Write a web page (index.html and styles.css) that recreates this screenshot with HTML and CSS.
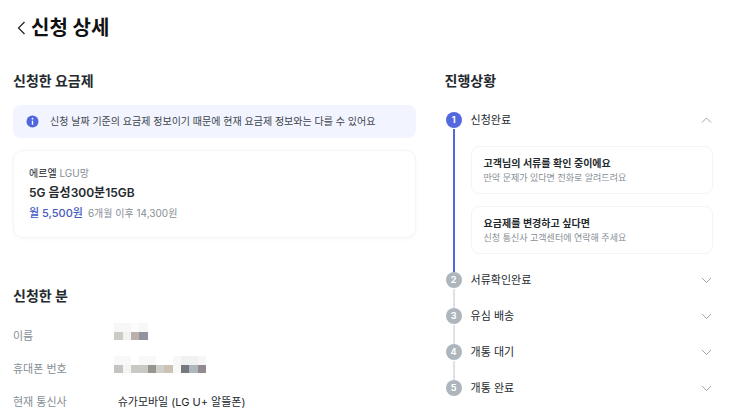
FILE: index.html
```html
<!DOCTYPE html>
<html lang="ko">
<head>
<meta charset="utf-8">
<meta name="viewport" content="width=device-width, initial-scale=1">
<title>신청 상세</title>
<link rel="stylesheet" href="styles.css">
</head>
<body>
<header class="topbar">
  <button class="back" type="button" aria-label="뒤로">
    <svg width="10" height="16" viewBox="0 0 10 16"><path d="M8.500 2 2.500 8l6 6" fill="none" stroke="#222" stroke-width="1.200"/></svg>
  </button>
  <h1>신청 상세</h1>
</header>
<main class="page">
  <div class="main-column">
    <section>
      <h2>신청한 요금제</h2>
      <p class="notice">
        <svg width="13" height="13" viewBox="0 0 13 13" aria-hidden="true"><circle cx="6.500" cy="6.500" r="6" fill="#4f66dc"/><circle cx="6.500" cy="3.700" r=".9" fill="#fff"/><path d="M6.500 5.700v4" stroke="#fff" stroke-width="1.400"/></svg>
        <span>신청 날짜 기준의 요금제 정보이기 때문에 현재 요금제 정보와는 다를 수 있어요</span>
      </p>
      <article class="plan">
        <p class="carrier">에르엘 <span class="network">LGU망</span></p>
        <h3 class="plan-name">5G 음성300분15GB</h3>
        <p class="price"><span class="monthly">월 5,500원</span><span class="later">6개월 이후 14,300원</span></p>
      </article>
    </section>
    <section class="applicant">
      <h2>신청한 분</h2>
      <dl class="details">
        <div class="row">
          <dt>이름</dt>
          <dd>
            <svg class="mask" width="34" height="17" viewBox="0 0 34 17" shape-rendering="crispEdges" role="img" aria-label="비공개">
              <path fill="#f7f7f7" d="M0 0h17v9H0zM25 0h9v9h-9z"/><path fill="#fcfcfc" d="M17 0h8v9h-8z"/>
              <path fill="#cacac6" d="M0 9h9v8H0z"/><path fill="#f2f2ee" d="M9 9h8v8H9z"/><path fill="#bbb0ab" d="M17 9h8v8h-8z"/><path fill="#91949d" d="M25 9h9v8h-9z"/>
            </svg>
          </dd>
        </div>
        <div class="row">
          <dt>휴대폰 번호</dt>
          <dd>
            <svg class="mask" width="92" height="17" viewBox="0 0 92 17" shape-rendering="crispEdges" role="img" aria-label="비공개">
              <path fill="#f8f8f8" d="M0 0h17v9H0zM25 0h17v9H25zM59 0h8v9h-8z"/><path fill="#f0f2f2" d="M67 0h17v9H67z"/><path fill="#f6f6f6" d="M84 0h8v9h-8z"/>
              <path fill="#c2c5c1" d="M0 9h9v8H0z"/><path fill="#f4f4f0" d="M9 9h8v8H9z"/><path fill="#c8c9c5" d="M17 9h17v8H17z"/><path fill="#969590" d="M34 9h8v8h-8z"/><path fill="#d0cec7" d="M42 9h8v8h-8z"/><path fill="#cbc1b5" d="M50 9h9v8h-9z"/><path fill="#f8f8f6" d="M59 9h8v8h-8z"/><path fill="#77787d" d="M67 9h8v8h-8z"/><path fill="#aeb8bc" d="M75 9h9v8h-9z"/><path fill="#918b8f" d="M84 9h8v8h-8z"/>
            </svg>
          </dd>
        </div>
        <div class="row">
          <dt>현재 통신사</dt>
          <dd class="value">슈가모바일 (LG U+ 알뜰폰)</dd>
        </div>
      </dl>
    </section>
  </div>
  <section class="progress">
    <h2>진행상황</h2>
    <ol class="steps">
      <li class="step current">
        <div class="rail"><span class="badge">1</span></div>
        <div class="step-body">
          <button class="step-head" type="button" aria-expanded="true">신청완료
            <svg width="11" height="8" viewBox="0 0 11 8" aria-hidden="true"><path d="m1 6.500 4.500-4.500L10 6.500"/></svg></button>
          <div class="tips">
            <article class="tip"><h3>고객님의 서류를 확인 중이에요</h3><p>만약 문제가 있다면 전화로 알려드려요</p></article>
            <article class="tip"><h3>요금제를 변경하고 싶다면</h3><p>신청 통신사 고객센터에 연락해 주세요</p></article>
          </div>
        </div>
      </li>
      <li class="step">
        <div class="rail"><span class="badge">2</span></div>
        <div class="step-body"><button class="step-head" type="button" aria-expanded="false">서류확인완료
          <svg width="11" height="8" viewBox="0 0 11 8" aria-hidden="true"><path d="m1 2 4.500 4.500L10 2"/></svg></button></div>
      </li>
      <li class="step">
        <div class="rail"><span class="badge">3</span></div>
        <div class="step-body"><button class="step-head" type="button" aria-expanded="false">유심 배송
          <svg width="11" height="8" viewBox="0 0 11 8" aria-hidden="true"><path d="m1 2 4.500 4.500L10 2"/></svg></button></div>
      </li>
      <li class="step">
        <div class="rail"><span class="badge">4</span></div>
        <div class="step-body"><button class="step-head" type="button" aria-expanded="false">개통 대기
          <svg width="11" height="8" viewBox="0 0 11 8" aria-hidden="true"><path d="m1 2 4.500 4.500L10 2"/></svg></button></div>
      </li>
      <li class="step">
        <div class="rail"><span class="badge">5</span></div>
        <div class="step-body"><button class="step-head" type="button" aria-expanded="false">개통 완료
          <svg width="11" height="8" viewBox="0 0 11 8" aria-hidden="true"><path d="m1 2 4.500 4.500L10 2"/></svg></button></div>
      </li>
    </ol>
  </section>
</main>
</body>
</html>
```
FILE: styles.css
```css
* {
  box-sizing: border-box;
}

body,
h1,
h2,
h3,
p,
dl,
dd,
ol {
  margin: 0;
  padding: 0;
}

body {
  background: #fff;
  color: #24292e;
  font-family: Inter, "Noto Sans CJK KR", sans-serif;
  font-size: 11px;
  line-height: 20px;
}

button {
  border: 0;
  padding: 0;
  background: none;
  color: inherit;
  font: inherit;
  cursor: pointer;
}

svg {
  display: block;
  flex: none;
}

.topbar {
  display: flex;
  align-items: center;
  gap: 5px;
  padding: 14px 16px 0;
}

h1 {
  color: #111;
  font-size: 20px;
  line-height: 28px;
}

h2 {
  font-size: 14px;
  line-height: 20px;
}

.page {
  display: grid;
  grid-template-columns: 3fr 2fr;
  gap: 29px;
  padding: 29px 30px 0 13px;
}

.notice {
  display: flex;
  align-items: center;
  gap: 11px;
  margin-top: 14px;
  padding: 6px 13px 7px;
  border-radius: 8px;
  background: #f2f5ff;
  color: #3c434b;
  font-size: 10px;
}

.plan {
  margin-top: 12px;
  padding: 12px 15px 14px;
  border: 1px solid #f5f5f6;
  border-radius: 10px;
  box-shadow: 0 1px 4px rgba(0, 0, 0, 0.04);
}

.carrier {
  font-size: 10px;
}

.network,
.later {
  color: #868e96;
}

.plan-name {
  font-size: 12px;
  font-weight: 600;
  line-height: 20px;
}

.price {
  display: flex;
  align-items: baseline;
  gap: 5px;
}

.monthly {
  color: #4659c4;
  font-weight: 500;
}

.later {
  font-size: 10px;
}

.applicant {
  margin-top: 48px;
}

.details {
  display: grid;
  gap: 13px;
  margin-top: 20px;
}

.row {
  display: grid;
  grid-template-columns: 1fr 3fr;
}

dt {
  color: #868e96;
}

.mask {
  margin-top: -3px;
}

.value {
  padding-left: 4px;
}

.steps {
  margin-top: 21px;
  list-style: none;
}

.step {
  display: flex;
  gap: 8px;
}

.rail {
  display: flex;
  flex-direction: column;
  align-items: center;
  gap: 1px;
  width: 18px;
}

.badge {
  width: 16px;
  height: 16px;
  border-radius: 50%;
  background: #adb5bd;
  color: #fff;
  font-size: 9px;
  font-weight: 700;
  line-height: 16px;
  text-align: center;
}

.step:not(:last-child) .rail::after {
  content: "";
  flex: 1;
  width: 2px;
  background: #dee2e6;
}

.current .badge,
.step.current .rail::after {
  background: #5468e0;
}

.step-body {
  flex: 1;
  padding-bottom: 20px;
}

.step:last-child .step-body {
  padding-bottom: 0;
}

.current .step-body {
  padding-bottom: 18px;
}

.step-head {
  display: flex;
  align-items: center;
  justify-content: space-between;
  width: 100%;
  padding-right: 1px;
  line-height: 16px;
}

.step-head path {
  fill: none;
  stroke: #a0a4a8;
  stroke-width: 1;
}

.tips {
  display: grid;
  gap: 12px;
  margin-top: 18px;
}

.tip {
  padding: 8px 12px;
  border: 1px solid #f3f4f5;
  border-radius: 8px;
}

.tip h3 {
  font-size: 10px;
  font-weight: 600;
  line-height: 16px;
}

.tip p {
  color: #868e96;
  font-size: 9px;
  line-height: 14px;
}
```
